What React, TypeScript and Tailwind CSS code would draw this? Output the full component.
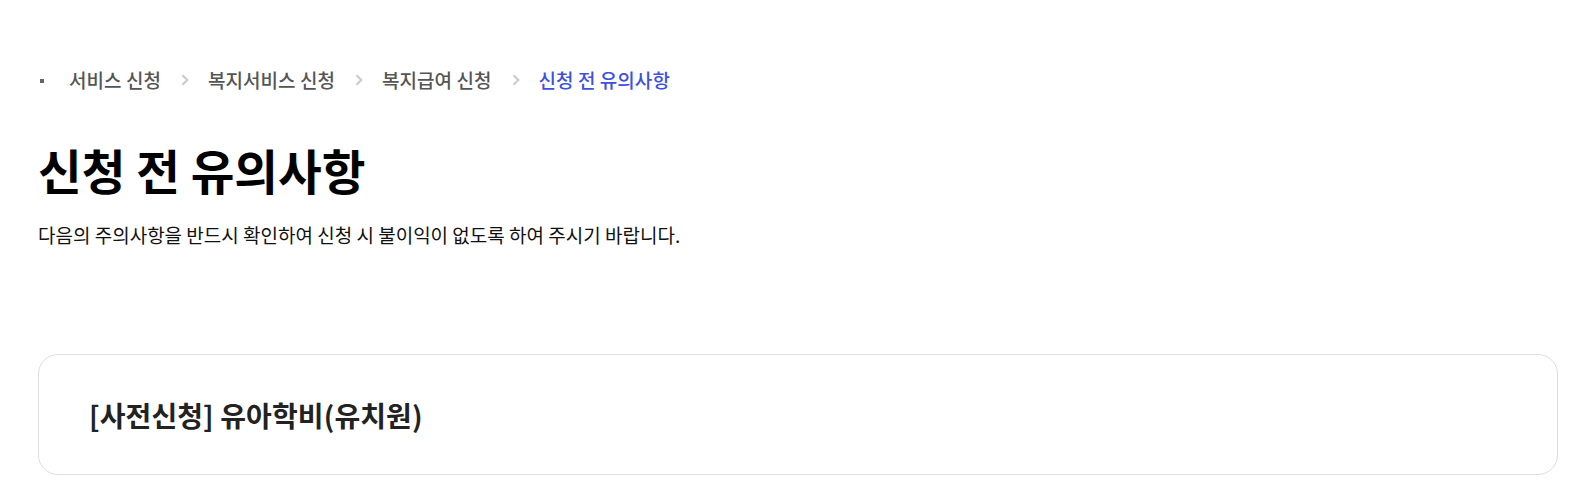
import React from "react";

const font = { fontFamily: '"Noto Sans CJK KR", "Noto Sans", sans-serif' };

function Chevron() {
  return (
    <svg width="8" height="12" viewBox="0 0 8 12" className="ml-[20px] mr-[19px]">
      <path d="M1.5 1.2 L6.3 6 L1.5 10.8" fill="none" stroke="#cccccc" strokeWidth="2.2" />
    </svg>
  );
}

export default function App() {
  return (
    <div className="bg-white w-[1580px] h-[500px] overflow-hidden" style={font}>
      <div className="pl-[38px] pr-[22px] pt-[66px]">
        <nav className="flex items-center text-[19px] font-medium text-[#555] h-[28px] tracking-[0.05px]">
          <span className="w-[4px] h-[4px] bg-[#666] ml-[2px] mr-[25px] mt-[2px]" />
          <span>서비스 신청</span>
          <Chevron />
          <span>복지서비스 신청</span>
          <Chevron />
          <span>복지급여 신청</span>
          <Chevron />
          <span className="text-[#3d50e0]">신청 전 유의사항</span>
        </nav>
        <h1 className="mt-[46px] text-[47.5px] font-bold leading-[60px] text-black">신청 전 유의사항</h1>
        <p className="mt-[21px] text-[19px] text-[#111] leading-[28px]">
          다음의 주의사항을 반드시 확인하여 신청 시 불이익이 없도록 하여 주시기 바랍니다.
        </p>
        <div className="mt-[105px] border border-[#dedede] rounded-[20px] h-[121px] flex items-center pl-[50px]">
          <h2 className="text-[28px] font-semibold text-[#222] tracking-[0.1px]">[사전신청] 유아학비(유치원)</h2>
        </div>
      </div>
    </div>
  );
}
